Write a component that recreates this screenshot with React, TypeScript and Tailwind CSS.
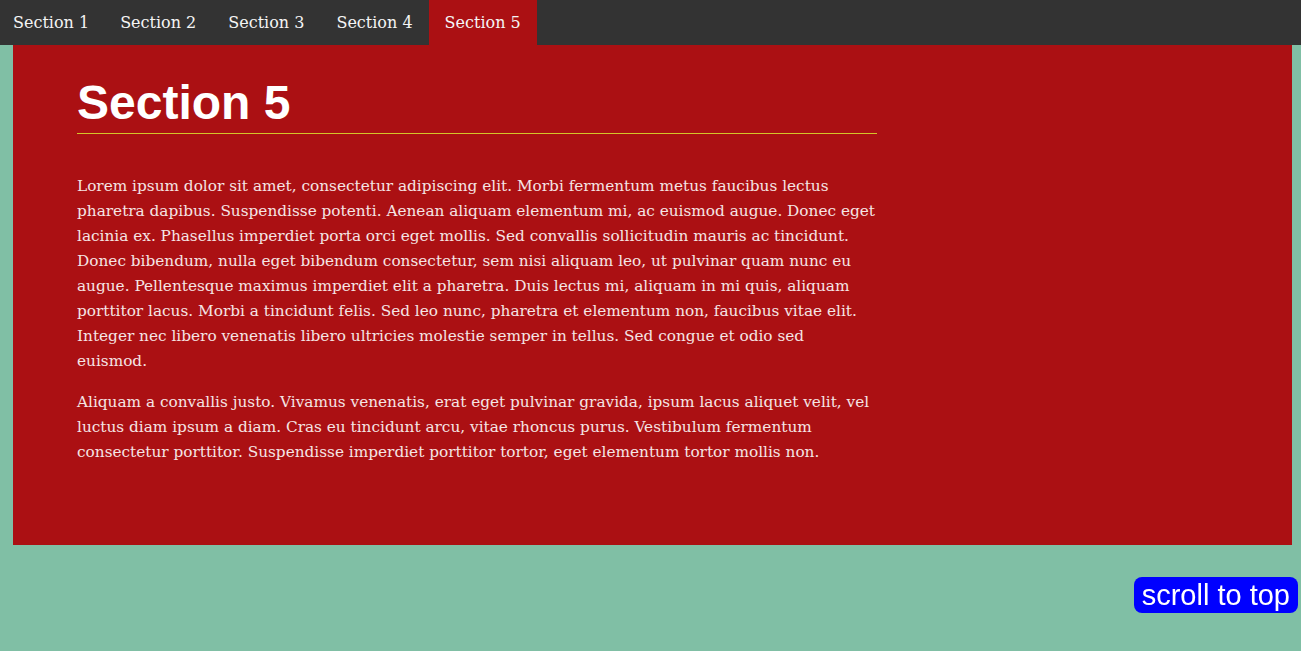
import { FC } from "react";

const sections = ["Section 1", "Section 2", "Section 3", "Section 4", "Section 5"];

const App: FC = () => {
  const active = "Section 5";

  return (
    <div className="min-h-screen bg-[#80bfa5] font-['DejaVu_Serif',serif]">
      <nav className="flex h-[45px] bg-[#333333]">
        {sections.map((s, i) => (
          <a
            key={s}
            href="#"
            className={`flex items-center text-[16px] text-[#f5f5f5] ${i === 0 ? "pl-[13px] pr-[15px]" : "px-[16px]"} ${
              s === active ? "bg-[#ab1013]" : ""
            }`}
          >
            {s}
          </a>
        ))}
      </nav>

      <section className="ml-[13px] mr-[9px] h-[500px] bg-[#ab1013] px-[64px] pt-[30px]">
        <div className="w-[800px]">
          <h1 className="border-b border-[#d4c42a] pb-[2px] font-['Liberation_Sans',Arial,sans-serif] text-[48px] font-bold leading-[56px] text-white">
            Section 5
          </h1>
          <div className="mt-[40px] space-y-[16px] text-[15.3px] leading-[25px] text-[#f5e4e4]">
            <p>
              Lorem ipsum dolor sit amet, consectetur adipiscing elit. Morbi fermentum metus faucibus lectus
              pharetra dapibus. Suspendisse potenti. Aenean aliquam elementum mi, ac euismod augue. Donec eget
              lacinia ex. Phasellus imperdiet porta orci eget mollis. Sed convallis sollicitudin mauris ac tincidunt.
              Donec bibendum, nulla eget bibendum consectetur, sem nisi aliquam leo, ut pulvinar quam nunc eu
              augue. Pellentesque maximus imperdiet elit a pharetra. Duis lectus mi, aliquam in mi quis, aliquam
              porttitor lacus. Morbi a tincidunt felis. Sed leo nunc, pharetra et elementum non, faucibus vitae elit.
              Integer nec libero venenatis libero ultricies molestie semper in tellus. Sed congue et odio sed
              euismod.
            </p>
            <p>
              Aliquam a convallis justo. Vivamus venenatis, erat eget pulvinar gravida, ipsum lacus aliquet velit, vel
              luctus diam ipsum a diam. Cras eu tincidunt arcu, vitae rhoncus purus. Vestibulum fermentum
              consectetur porttitor. Suspendisse imperdiet porttitor tortor, eget elementum tortor mollis non.
            </p>
          </div>
        </div>
      </section>

      <button className="fixed bottom-[38px] right-[3px] rounded-[8px] bg-[#0000ff] px-[8px] font-['Liberation_Sans',Arial,sans-serif] text-[29px] leading-[36px] text-white">
        scroll to top
      </button>
    </div>
  );
};

export default App;
